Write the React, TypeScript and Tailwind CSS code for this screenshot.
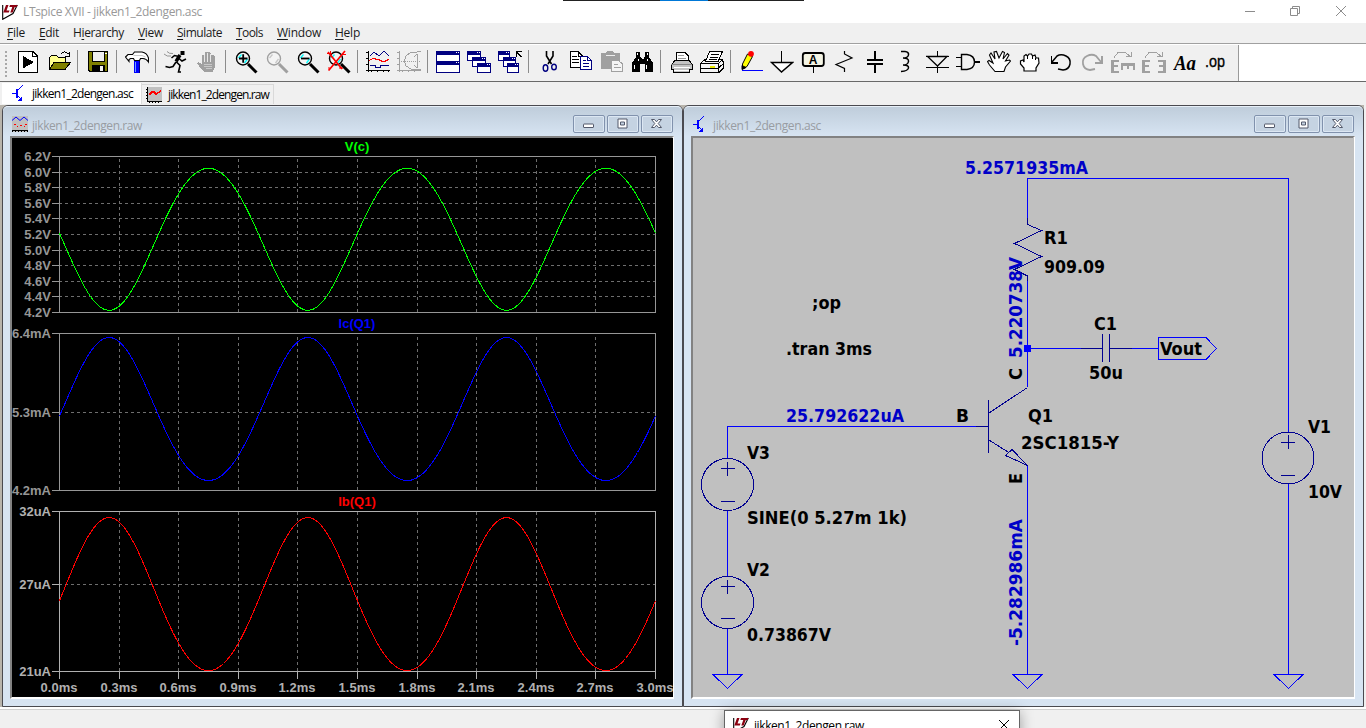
import { useLayoutEffect, useRef, useState } from "react";
import type { ReactNode } from "react";

/* Text set to an exact advance width by adjusting its tracking. */
function Fit({ w, children, className = "" }: { w: number; children: ReactNode; className?: string }) {
  const ref = useRef<HTMLSpanElement>(null);
  const [ls, setLs] = useState(0);
  useLayoutEffect(() => {
    const el = ref.current;
    if (!el) return;
    const n = (el.textContent || "").length;
    setLs((w - el.getBoundingClientRect().width) / n);
  }, [w]);
  return (
    <span ref={ref} className={`inline-block whitespace-nowrap ${className}`} style={{ letterSpacing: ls }}>
      {children}
    </span>
  );
}

function Icon({ children }: { children: ReactNode }) {
  return (
    <button className="flex h-6 w-[31px] shrink-0 pl-1">
      <svg width="24" height="24" viewBox="0 0 24 24" fill="none" stroke="#000" strokeWidth="1" shapeRendering="crispEdges">
        {children}
      </svg>
    </button>
  );
}

const Sep = () => (
  <div className="flex h-6 w-2 shrink-0 pl-[3px]">
    <div className="h-[23px] w-px bg-[#8c8c8c]" />
  </div>
);

function Lens({ c = "#000", glint = "#00ffff", children }: { c?: string; glint?: string; children?: ReactNode }) {
  return (
    <Icon>
      <g shapeRendering="auto">
        <circle cx="9" cy="8.500" r="6.500" fill="#f4f4f4" stroke={c} strokeWidth="1.400" />
        <path d="M4.500 8L7.500 4.500M10.500 13L13.500 9" stroke={glint} strokeWidth="1.300" />
        <path d="M14 14L22.500 22.500" stroke={c} strokeWidth="3" />
        {children}
      </g>
    </Icon>
  );
}

const MiniWin = ({ x, y, w = 14, h = 10 }: { x: number; y: number; w?: number; h?: number }) => (
  <>
    <rect x={x + 0.5} y={y + 0.5} width={w - 1} height={h - 1} fill="#fff" stroke="#000080" />
    <rect x={x} y={y} width={w} height="4" fill="#000080" stroke="none" />
    <path d={`M${x + w - 4} ${y + 1.5}h1m1 0h1`} stroke="#fff" />
  </>
);

const TransistorIcon = () => (
  <svg width="12" height="17" viewBox="0 0 12 17" fill="none" stroke="#0000ff" shapeRendering="crispEdges">
    <path d="M0 8.500H5" />
    <path d="M4.500 4V13" strokeWidth="2" />
    <path d="M5 6L10.500 .5M5 10L10 15" />
    <path d="M10 15.500h-4l3.500-4z" fill="#0000ff" stroke="none" />
  </svg>
);

const WaveIcon = () => (
  <svg width="16" height="16" viewBox="0 0 16 16" fill="none">
    <rect width="16" height="16" fill="#c0c0c0" />
    <path d="M0 4.500L4 1L8 4.500L12 1L16 4.500" stroke="#0000ff" />
    <path d="M2 8.500h2m4 1h2m3-1h2M5 10.500h1m6 0h1" stroke="#f00" />
    <path d="M0 14.500h16" stroke="#000" />
    <path d="M0 15.500h16" stroke="#000" strokeDasharray="1 2" />
  </svg>
);

const LogoIcon = ({ s = 16 }: { s?: number }) => (
  <svg width={s} height={s} viewBox="0 0 16 16" fill="none">
    <path d="M.7 1V15.300L11 9.500L15.300 1" fill="#fff" stroke="#000" strokeWidth="1.100" />
    <path d="M4 1H6.500L4.500 6.500H7.500L6.800 8.500H1.300zM8 1H15.500L14.800 3H12.700L10.700 8.500H8.300L10.300 3H7.300z" fill="#8b0010" />
  </svg>
);

function Toolbar() {
  const g = "#a0a0a0";
  return (
    <div className="flex h-[36px] w-full bg-white">
      <div className="flex h-full w-[1239px] items-start border-r border-[#9a9a9a] bg-[#f0f0f0] pt-[5px]">
        <div className="flex h-6 w-3 shrink-0 pl-[5px] pt-px">
          <svg width="2" height="27" className="overflow-visible">
            <path d="M1 0V27" stroke="#a8a8a8" strokeWidth="2" strokeDasharray="2 2" shapeRendering="crispEdges" />
          </svg>
        </div>
        <Icon>
          <path d="M2.500 1.500H17L21.500 6V22.500H2.500z" fill="#fff" />
          <path d="M16.500 1.500V6.500H21.500" />
          <path d="M7 6L18 12.200L7 18.500z" fill="#000" stroke="none" />
        </Icon>
        <Icon>
          <path d="M2.500 19V7.500L4.500 5.500H9.500L11.500 7.500H18.500V12" fill="#ffff90" />
          <path d="M7 12.500H23.500L18 19.500H2.500z" fill="#808000" />
          <path d="M13.500 4.500Q17 -.5 21.500 4M22.500 2V6.500H18" />
        </Icon>
        <Sep />
        <Icon>
          <path d="M2.500 1.500H21.500V21.500H4L2.500 20z" fill="#808000" />
          <rect x="6.500" y="1.500" width="12" height="10" fill="#f0f0f0" />
          <path d="M19 3.500h2" stroke="#fff" />
          <rect x="6" y="15" width="13" height="7" fill="#000" stroke="none" />
          <rect x="14" y="16" width="3" height="5" fill="#f0f0f0" stroke="none" />
        </Icon>
        <Sep />
        <Icon>
          <g shapeRendering="auto">
            <path d="M.5 7L3 4.500H7.500L9.500 2H17Q22 3 23.500 8V12Q21 8.500 18 8.500H15.500L14.500 10.500H9.500L8.500 8.500H5.500L4 9.500V11.500z" fill="#fff" strokeWidth="1.100" />
            <path d="M8.500 5.500H17L20.500 7" stroke="#c8c8c8" />
          </g>
          <rect x="9" y="11" width="6" height="12" fill="#0000ff" stroke="none" />
          <path d="M14.500 11V23" stroke="#000080" />
          <path d="M10.500 12V22" stroke="#6aa0ff" />
        </Icon>
        <Sep />
        <Icon>
          <g shapeRendering="auto">
            <path d="M16.500 1h4v4h-4z" fill="#000" stroke="none" />
            <path d="M16 5L12 11.500" strokeWidth="3.400" />
            <path d="M15 6.500L10.500 5.500L7.500 8M15 8.500L18 11L22 9M12.500 12L16 15.500L14.500 22H17M12 12L9 16.500L5.500 17.500L1.500 16.500" strokeWidth="1.600" />
            <path d="M3 1.500Q5 4 9 3.500M0 4Q3 7 7 6" stroke="#888" strokeWidth=".9" />
          </g>
        </Icon>
        <Icon>
          <path d="M7 20L2 13.500L3 12L7 14V5.500L8 4.500L10 6V2.500L12 1.500L13 3V2.500L15 2L16 4V5L18 4.500L19.500 6V18L17.500 22H9z" fill={g} stroke="none" />
          <path d="M9.500 5V12M12.500 3V12M15.500 4V12" stroke="#e8e8e8" />
          <path d="M9 14.500h8m-8 2h8m-6 2h6" stroke="#c8c8c8" />
        </Icon>
        <Sep />
        <Lens>
          <path d="M5 8.500H13.500M9.200 4.300V12.700" strokeWidth="1.800" />
        </Lens>
        <Lens c="#a0a0a0" glint="#c8c8c8" />
        <Lens>
          <path d="M5 8.500H13.500" strokeWidth="1.800" />
        </Lens>
        <Lens>
          <path d="M1 2L15 19M18 1L2 20" stroke="#f00" strokeWidth="1.700" />
          <path d="M0 3.500h5M3.500 1v4M15 4.500h4M2 17v4M12 18h4" stroke="#f00" />
        </Lens>
        <Sep />
        <Icon>
          <path d="M2.500 1V22M0 20.500H24M0 2.500h2m-2 6h2m-2 6h2M5.500 20v2m6-2v2m6-2v2m5-2v2" />
          <path d="M4 6L8 2L13 6L18 1L23 6" stroke="#000080" />
          <path d="M3 10.500L7 8.500L12 9.500L18 12L23 9" stroke="#f00" strokeWidth="1.300" />
          <path d="M4 15.500H9V17.500H14V15.500H23" stroke="#000080" />
        </Icon>
        <Icon>
          <g stroke={g}>
            <path d="M2.500 1V22M0 20.500H24M0 2.500h2m-2 6h2m-2 6h2M5.500 20v2m6-2v2m6-2v2" />
            <path d="M24 1L20 2L14 2L9 6L7.500 11L9 16L14 19H20L24 20M20.500 4V18M20 4L17 7M20 18L17 15" />
            <path d="M4 11.500H23" strokeDasharray="1 1" />
          </g>
        </Icon>
        <Sep />
        <Icon>
          <MiniWin x={0} y={1} w={24} h={11} />
          <MiniWin x={0} y={11} w={24} h={12} />
        </Icon>
        <Icon>
          <MiniWin x={0} y={1} />
          <MiniWin x={5} y={7} />
          <MiniWin x={10} y={13} />
        </Icon>
        <Icon>
          <MiniWin x={0} y={1} w={12} />
          <MiniWin x={5} y={7} w={13} />
          <MiniWin x={9} y={13} w={12} />
          <path d="M18.500 7V1.500H24M19 2L23.500 7" strokeWidth="1.300" />
        </Icon>
        <Sep />
        <Icon>
          <g shapeRendering="auto">
            <path d="M9.500 1V6L14.500 14M16 1V6L11 14" strokeWidth="1.600" />
            <ellipse cx="8.500" cy="18" rx="2.300" ry="3.200" stroke="#000080" strokeWidth="1.400" />
            <ellipse cx="17" cy="17" rx="2.300" ry="2.800" stroke="#000080" strokeWidth="1.400" />
          </g>
        </Icon>
        <Icon>
          <path d="M2.500 1.500H10L14.500 6V17.500H2.500z" fill="#fff" />
          <path d="M10 1.500V6H14M4 6.500h5m-5 3h7m-7 3h7" />
          <path d="M12.500 6.500H19.500L23.500 10.500V19.500H12.500z" fill="#fff" stroke="#000080" />
          <path d="M19.500 6.500V10.500H23.500M15 10.500h3m-3 3h6m-6 3h6" stroke="#000080" />
        </Icon>
        <Icon>
          <path d="M2 3H7L8.500 1H14L15.500 3H21V19H2z" fill={g} stroke="none" />
          <path d="M7 5.500H16" stroke="#eee" />
          <path d="M12.500 10.500H19.500L23.500 14V21.500H12.500z" fill="#f4f4f4" stroke={g} />
          <path d="M14.500 14.500h4m-4 3h7" stroke={g} />
        </Icon>
        <Icon>
          <path d="M6 2H10V6L12 9H14L15 6V2H19V7L23 13V22H15V14H10V22H2V13L6 7z" fill="#000" stroke="none" />
          <path d="M7.500 3v2m10-2v2M4.500 15v4m12-4v4M8.500 9v2m9-2v2" stroke="#fff" />
        </Icon>
        <Sep />
        <Icon>
          <path d="M7.500 11V2.500H16L19.500 6V11" fill="#fff" />
          <path d="M9 5.500h6m-6 3h8" stroke="#999" />
          <path d="M6 10.500H20L23.500 14.500V19.500H20.500V22.500H4.500V19.500H2.500V14.500z" fill="#c4c4c4" />
          <path d="M5 17.500H21M5 20.500H20" stroke="#fff" />
          <path d="M2 14.500H23" stroke="#888" />
        </Icon>
        <Icon>
          <path d="M.5 13.500L5 9.500H21L23.500 12V18L19 22.500H.5z" fill="#f4f4f4" />
          <path d="M5.500 11.500L9.500 1.500H22.500L18 11.500z" fill="#fff" />
          <path d="M10.500 4.500h8m-9 2.500h8m-9 2.500h8M.5 13.500H18.500V22M18.500 13.500L23 9.500M19 17.500L23 14M1 18.500h17" />
          <path d="M10 16.500h5" stroke="#e8e800" strokeWidth="2" />
        </Icon>
        <Sep />
        <Icon>
          <g shapeRendering="auto">
            <path d="M3.500 19V14L8.500 4L13.500 6.500L8 16.500z" fill="#ffff00" stroke="#000" />
            <path d="M3 19.500V15.500L7 17.500z" fill="#000" />
            <circle cx="12" cy="3.800" r="2.900" fill="#f00" stroke="none" />
          </g>
          <path d="M3 20.500H24" stroke="#0000ff" />
        </Icon>
        <Icon>
          <path d="M11.500 1V12" strokeWidth="1" />
          <path d="M1.500 12.500H22.500L11.500 22z" fill="#fff" shapeRendering="auto" strokeWidth="1.500" />
        </Icon>
        <Icon>
          <g shapeRendering="auto">
            <rect x="1.800" y="3" width="21" height="13" rx="2.500" fill="#f4f4e4" strokeWidth="1.800" />
          </g>
          <path d="M12.500 17V23" />
          <text x="12" y="14" textAnchor="middle" fontSize="12" fontWeight="700" fontFamily="Liberation Sans, sans-serif" fill="#000" stroke="none">A</text>
        </Icon>
        <Icon>
          <path d="M12.500 1V4L20 8L4 14.500L12.500 18.500V22" shapeRendering="auto" strokeWidth="1.200" />
        </Icon>
        <Icon>
          <path d="M12 1V10M12 15V23" strokeWidth="2" />
          <path d="M4 10H20M4 14H20" strokeWidth="2" />
        </Icon>
        <Icon>
          <path d="M7 1.500H11Q15 2 14.500 5T9 8Q15 8 14.500 11.500T9 15Q15 15 14.500 18T7 21.500" shapeRendering="auto" strokeWidth="1.500" />
        </Icon>
        <Icon>
          <path d="M12.500 1V6M12.500 16V23M1 6.500H24M1 17.500H24" strokeWidth="1" />
          <path d="M2.500 6.500H22L12.500 16z" shapeRendering="auto" strokeWidth="1.300" />
        </Icon>
        <Icon>
          <path d="M5.500 4.500H11Q18.500 5.500 18.500 12T11 19.500H5.500z" shapeRendering="auto" strokeWidth="1.400" />
          <path d="M0 7.500H6M0 16.500H6" />
          <path d="M18 12H24" strokeWidth="2" />
        </Icon>
        <Icon>
          <path
            d="M8 21.500L2.500 15L.5 11.500L2 10.500L6 13L2.500 5L4 3L8 9L7 2L9.500 1.500L12 8L15.500 1.500L17.500 2.500L16 9L20.500 3.500L22 5L18.500 11L22.500 10L23.500 11L18.500 17L17 21.500z"
            fill="#fff" shapeRendering="auto" strokeWidth="1.100"
          />
        </Icon>
        <Icon>
          <path
            d="M6 21V18L2.500 14V11L5 10L6 12V6L8 4.500L9.500 6L11 4L13.500 4L14.500 6L17 5L18 8L20.500 8L21 13L18 18V21z"
            fill="#fff" shapeRendering="auto" strokeWidth="1.200"
          />
          <path d="M9.500 6V9M14 6V9M17.500 8V10" />
        </Icon>
        <Icon>
          <path d="M2.500 6V13H9" strokeWidth="1.500" />
          <path d="M3 12L8 6Q12 3.500 17 6T21 14T14 20L9 19" shapeRendering="auto" strokeWidth="1.500" />
        </Icon>
        <Icon>
          <path d="M21.500 6V13H15" stroke={g} strokeWidth="2" />
          <path d="M21 12L16 6Q12 3.500 7 6T3 14T10 20L15 19" stroke={g} shapeRendering="auto" strokeWidth="1.800" />
        </Icon>
        <Icon>
          <g stroke={g}>
            <path d="M3 7.500L7 2.500H14L19 6M20.500 2V6.500H15" />
            <path d="M1.500 10V23" strokeWidth="3" />
            <path d="M0 11H8M0 16H7M0 22H8" strokeWidth="2" />
            <path d="M10 14.500H24" strokeWidth="3" />
            <path d="M11 13V20M17 13V19M23 13V20" strokeWidth="2" />
          </g>
        </Icon>
        <Icon>
          <g stroke={g}>
            <path d="M3 7.500L7 2.500H14L19 6M20.500 2V6.500H15" />
            <path d="M1.500 10V23M22.500 10V23" strokeWidth="3" />
            <path d="M0 11H8M0 16H7M0 22H8M16 11H24M17 16H24M16 22H24" strokeWidth="2" />
          </g>
        </Icon>
        <Icon>
          <text x="1" y="20" fontSize="20" fontStyle="italic" fontWeight="700" textLength="22" lengthAdjust="spacingAndGlyphs" fontFamily="Liberation Serif, serif" fill="#000" stroke="none">Aa</text>
        </Icon>
        <button className="flex h-[26px] w-[31px] shrink-0 pl-1">
          <svg width="26" height="26" viewBox="0 0 26 26">
            <text x="1" y="17" fontSize="17" textLength="20" lengthAdjust="spacingAndGlyphs" fontFamily="Liberation Sans, sans-serif" fill="#000" stroke="#000" strokeWidth=".35">.op</text>
          </svg>
        </button>
      </div>
    </div>
  );
}

const CapButton = ({ children }: { children: ReactNode }) => (
  <button className="h-[18px] w-8 rounded-[2px] border border-[#8192ad] bg-[#c5d3e2] shadow-[inset_0_0_0_1px_#dce7f3]">
    <svg width="30" height="16" viewBox="0.5 0.5 30 16" fill="#fff" stroke="#53596b">
      {children}
    </svg>
  </button>
);

function ChildWindow({ icon, title, tw, className, children }: { icon: ReactNode; title: string; tw: number; className: string; children: ReactNode }) {
  return (
    <section className={`flex h-[602px] flex-col rounded-t-[6px] border border-[#4a4a50] bg-[#d7e4f2] ${className}`}>
      <header className="flex h-[30px] shrink-0 items-start rounded-t-[5px] border-t border-[#e8f0f8] bg-linear-to-b from-[#bfcddb] to-[#d7e4f2] pl-2 pr-[9px] pt-2">
        <div className="flex h-[18px] w-[21px] items-center pl-px">{icon}</div>
        <div className="flex-1 pt-[2px] font-['Open_Sans','Noto_Sans',sans-serif] text-[12px] leading-[18px] text-[#989ca2]">
          <Fit w={tw}>{title}</Fit>
        </div>
        <div className="flex gap-[2px]">
          <CapButton><rect x="10" y="8.500" width="10" height="3.500" rx=".5" /></CapButton>
          <CapButton><path fillRule="evenodd" d="M10.500 3.500h9v9h-9zM13 6.500h4v3h-4z" /></CapButton>
          <CapButton><path d="M10 4h3l2 2.300L17 4h3l-3.300 4L20 12h-3l-2-2.300L13 12h-3l3.300-4z" /></CapButton>
        </div>
      </header>
      <div className="ml-[7px] mr-[8px] h-[563px] border-2 border-b-white border-l-[#828282] border-r-white border-t-[#828282]">
        {children}
      </div>
    </section>
  );
}

const gx = Array.from({ length: 11 }, (_, k) => Math.round(59 + 59.6 * k));

function wave(c: number, a: number, b: number) {
  let d = "";
  for (let x = 0; x <= 596; x += 2) {
    const t = (x / 596) * 6 * Math.PI;
    const y = c - a * Math.sin(t) + b * Math.cos(2 * t);
    d += `${x ? "L" : "M"}${(59.5 + x).toFixed(1)} ${y.toFixed(1)}`;
  }
  return d;
}

type Pane = { title: string; ty: number; color: string; ys: number[]; labels: string[]; d: string; axis: string };
const panes: Pane[] = [
  {
    title: "V(c)", ty: 151, color: "#00ff00", axis: "#969696",
    ys: Array.from({ length: 11 }, (_, k) => Math.round(156 + 15.6 * k)),
    labels: ["6.2V", "6.0V", "5.8V", "5.6V", "5.4V", "5.2V", "5.0V", "4.8V", "4.6V", "4.4V", "4.2V"],
    d: wave(236.3, -71, -3),
  },
  { title: "Ic(Q1)", ty: 328, color: "#0000ff", axis: "#969696", ys: [333, 412, 490], labels: ["6.4mA", "5.3mA", "4.2mA"], d: wave(412.5, 71.5, 3.5) },
  { title: "Ib(Q1)", ty: 506, color: "#ff0000", axis: "#b0b0b0", ys: [511, 584, 671], labels: ["32uA", "27uA", "21uA"], d: wave(597.4, 76.5, 3.3) },
];

function PlotView() {
  return (
    <svg width="661" height="559" viewBox="12 138 661 559" className="block bg-black" fontFamily="Liberation Sans, Arial, sans-serif" fontSize="13" fontWeight="700">
      {panes.map((p) => {
        const top = p.ys[0];
        const bot = p.ys[p.ys.length - 1];
        return (
          <g key={p.title}>
            <g shapeRendering="crispEdges" fill="none">
              <g stroke="#6e6e6e" strokeDasharray="3 3">
                {gx.slice(1, -1).map((x) => <path key={x} d={`M${x + 0.5} ${bot}V${top}`} />)}
                {p.ys.slice(1, -1).map((y) => <path key={y} d={`M59 ${y + 0.5}H655`} />)}
              </g>
              <g stroke={p.axis}>
                <rect x="59.500" y={top + 0.5} width="596" height={bot - top} />
                {p.ys.map((y) => <path key={y} d={`M52 ${y + 0.5}H59`} />)}
                {bot === 671 && gx.map((x) => <path key={x} d={`M${x + 0.5} 671V679`} />)}
              </g>
              <path d={p.d} stroke={p.color} />
            </g>
            <text x="357" y={p.ty} textAnchor="middle" fill={p.color}>{p.title}</text>
            {p.ys.map((y, i) => (
              <text key={y} x="51" y={y + 5} textAnchor="end" fill={p.axis}>{p.labels[i]}</text>
            ))}
          </g>
        );
      })}
      {gx.map((x, i) => (
        <text key={x} x={x} y="692" textAnchor="middle" fill="#b0b0b0">{(i * 0.3).toFixed(1)}ms</text>
      ))}
    </svg>
  );
}

const labels: [string, number, number, number, string?][] = [
  ["5.2571935mA", 965, 174, 123, "#0000c8"],
  ["R1", 1044, 244, 24],
  ["909.09", 1044, 273, 61],
  ["C1", 1094, 330, 23],
  ["50u", 1089, 379, 34],
  ["Vout", 1160, 355, 42],
  [";op", 812, 309, 29],
  [".tran 3ms", 786, 355, 86],
  ["25.792622uA", 786, 422, 118, "#0000c8"],
  ["B", 956, 422, 13],
  ["V3", 747, 459, 23],
  ["SINE(0 5.27m 1k)", 747, 524, 160],
  ["V2", 747, 576, 23],
  ["0.73867V", 747, 641, 84],
  ["Q1", 1028, 422, 25],
  ["2SC1815-Y", 1021, 449, 98],
  ["V1", 1308, 433, 23],
  ["10V", 1308, 498, 34],
];

const vertical: [string, number, number, string][] = [
  ["5.220738V", 358, 101, "#0000c8"],
  ["C", 380, 12, "#000"],
  ["E", 484, 11, "#000"],
  ["-5.282986mA", 646, 127, "#0000c8"],
];

const Source = ({ x, y, minus = 17 }: { x: number; y: number; minus?: number }) => (
  <>
    <circle cx={x} cy={y} r="26" />
    <path d={`M${x - 7} ${y - 16}h14m-7 -7v14M${x - 7} ${y + minus}h14`} />
  </>
);

function Schematic() {
  return (
    <svg width="661" height="559" viewBox="693 138 661 559" className="block bg-[#c0c0c0]" fontFamily="'DejaVu Sans Condensed', 'DejaVu Sans', sans-serif" fontSize="17.3" fontWeight="700">
      <g fill="none" shapeRendering="crispEdges">
        <g stroke="#0000ff">
          <path d="M1027.500 220V178.500H1288.500V432M1288.500 484V674M1027.500 280V387M1031 348.500H1081M1132 348.500H1158M976 426.500H727.500V458M727.500 511V576M727.500 628V674M1027.500 466V674" />
          <path d="M1158.500 337.500H1206L1216.500 348.500L1206 359.500H1158.500z" />
          {[727, 1027, 1288].map((x) => <path key={x} d={`M${x - 14} 674.500h29l-14.500 14z`} />)}
          <rect x="1024" y="345" width="7" height="7" fill="#0000ff" stroke="none" />
        </g>
        <g stroke="#000090">
          <path d="M1027.500 218V224.500L1041.500 230.500L1014.500 243.500L1041.500 256.500L1014.500 269.500L1027.500 276V281" />
          <path d="M1081 348.500H1102.500M1102.500 334V362M1109.500 334V362M1110 348.500H1132" />
          <path d="M976 426.500H988M988.500 400V453M989 413L1027.500 387.500M989 440L1008 452M1005.500 455.500L1012 449.500L1027.500 465.500z" />
          <Source x={727.5} y={484.5} />
          <Source x={727.5} y={602.5} minus={16} />
          <Source x={1288} y={458} />
        </g>
      </g>
      {labels.map(([t, x, y, w, c]) => (
        <text key={t} x={x} y={y - 0.3} textLength={w} lengthAdjust="spacingAndGlyphs" fill={c || "#000"}>{t}</text>
      ))}
      {vertical.map(([t, y, w, c]) => (
        <text key={t} transform={`translate(1022 ${y}) rotate(-90)`} textLength={w} lengthAdjust="spacingAndGlyphs" fill={c}>{t}</text>
      ))}
    </svg>
  );
}

const menus: [string, number, number][] = [
  ["File", 18, 0], ["Edit", 20, 0], ["Hierarchy", 51, 1], ["View", 25, 0],
  ["Simulate", 45, 0], ["Tools", 27, 0], ["Window", 44, 0], ["Help", 25, 0],
];

export default function App() {
  return (
    <div className="relative flex h-[728px] w-[1366px] flex-col overflow-hidden bg-[#f0f0f0] font-['Open_Sans','Noto_Sans',sans-serif] text-[12px]">
      <div className="absolute left-[563px] top-0 flex h-px w-[241px] justify-center bg-[#222]">
        <div className="h-px w-12 bg-[#0078d7]" />
      </div>
      <div className="flex h-[23px] shrink-0 items-center bg-white pl-[2px] text-[#999]">
        <LogoIcon />
        <Fit w={179} className="ml-[5px] pt-px leading-[22px]">LTspice XVII - jikken1_2dengen.asc</Fit>
        <svg width="101" height="12" viewBox="0 0 101 12" className="-mt-[2px] ml-auto mr-[20px]" fill="none" stroke="#8c8c8c">
          <path d="M0 6.500H10" />
          <path d="M45.500 3.500h7v7h-7zM47.500 3V1.500h7v7H53" />
          <path d="M91 1L101 11M101 1L91 11" />
        </svg>
      </div>
      <nav className="flex h-[20px] shrink-0 items-center gap-[14px] pl-[7px] text-[#1a1a1a]">
        {menus.map(([m, w, u]) => (
          <Fit key={m} w={w}>
            {m.slice(0, u)}<span className="underline underline-offset-2">{m[u]}</span>{m.slice(u + 1)}
          </Fit>
        ))}
      </nav>
      <div className="h-[2px] shrink-0 border-b border-t border-b-white border-t-[#a0a0a0]" />
      <Toolbar />
      <div className="flex h-[24px] shrink-0 items-start border-t border-[#696969] pl-[2px] text-black">
        <div className="mt-px flex h-[21px] w-[140px] items-center border-r border-[#dcdcdc] bg-white pl-[10px]">
          <TransistorIcon />
          <Fit w={101} className="ml-2">jikken1_2dengen.asc</Fit>
        </div>
        <div className="mt-[2px] flex h-[20px] w-[132px] items-center border-r border-t border-[#d9d9d9] pl-[4px]">
          <svg width="16" height="16" viewBox="0 0 16 16" fill="none" shapeRendering="crispEdges">
            <rect x="1" width="15" height="14" fill="#c0c0c0" />
            <path d="M1.500 0V14.500H16M0 2.500h2m-2 3h2m-2 3h2m-2 3h2M3.500 14v2m3-2v2m3-2v2m3-2v2" stroke="#000" />
            <path d="M3 8L6 5H8L10 7L15 4" stroke="#f00" strokeWidth="1.500" />
          </svg>
          <Fit w={101} className="ml-[6px] pt-px">jikken1_2dengen.raw</Fit>
        </div>
      </div>
      <main className="flex h-[602px] shrink-0 bg-[#b8b4ac] pl-[2px]">
        <ChildWindow className="w-[681px]" tw={110} title="jikken1_2dengen.raw" icon={<WaveIcon />}>
          <PlotView />
        </ChildWindow>
        <ChildWindow className="w-[681px]" tw={108} title="jikken1_2dengen.asc" icon={<TransistorIcon />}>
          <Schematic />
        </ChildWindow>
        <div className="flex-1 bg-[#f0f0f0]" />
      </main>
      <div className="h-[3px] shrink-0 border-b border-b-[#d0d0d0] bg-white" />
      <div className="absolute left-[724px] top-[710px] flex h-[30px] w-[296px] items-start border border-[#666] bg-white pl-[8px] pt-[6px] text-black shadow-[0_2px_14px_rgba(0,0,0,0.35)]">
        <LogoIcon />
        <Fit w={110} className="ml-[5px] leading-[18px]">jikken1_2dengen.raw</Fit>
        <svg width="10" height="10" viewBox="0 0 10 10" className="ml-auto mr-[10px] mt-[3px]" stroke="#000">
          <path d="M0 0L10 10M10 0L0 10" />
        </svg>
      </div>
    </div>
  );
}
